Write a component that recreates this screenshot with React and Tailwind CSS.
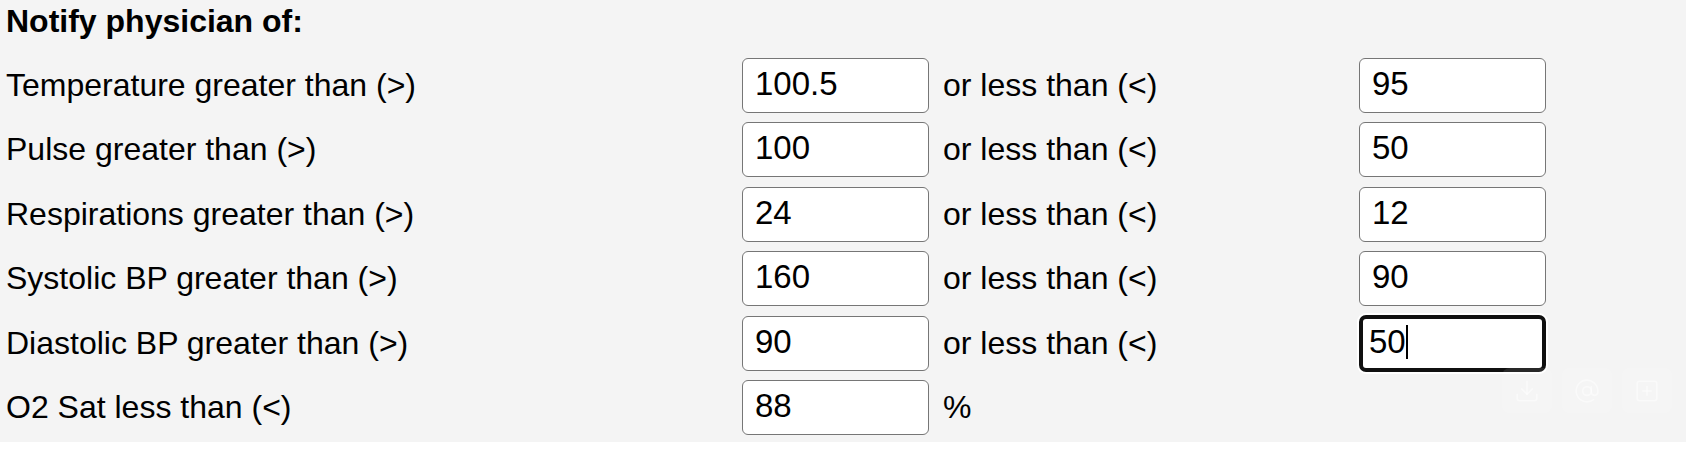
import React from "react";
import { Download, AtSign, SquarePlus } from "lucide-react";

const rows = [
  { label: "Temperature greater than (>)", high: "100.5", low: "95" },
  { label: "Pulse greater than (>)", high: "100", low: "50" },
  { label: "Respirations greater than (>)", high: "24", low: "12" },
  { label: "Systolic BP greater than (>)", high: "160", low: "90" },
  { label: "Diastolic BP greater than (>)", high: "90", low: "50", focused: true },
];

const inputCls =
  "w-[187px] h-[55px] bg-white border-[1.5px] border-[#767676] rounded-[6px] pl-[12px] pb-[3px] text-[33px] text-black outline-none";

const App = () => {
  return (
    <div className="w-full bg-white" style={{ fontFamily: '"Liberation Sans", Arial, sans-serif' }}>
      <div className="relative h-[442px] bg-[#f4f4f4] text-black">
        {/* Header */}
        <div className="h-[53px] pt-[3px] pl-[6px]">
          <div className="text-[32px] font-bold leading-[37px]">Notify physician of:</div>
        </div>

        {/* Rows */}
        {rows.map((row) => (
          <div key={row.label} className="flex items-center h-[64.5px]">
            <div className="w-[742px] pl-[6px] text-[32px] leading-[37px]">{row.label}</div>
            <input className={inputCls} defaultValue={row.high} readOnly />
            <div className="w-[430px] pl-[14px] text-[32px] leading-[37px]">or less than (&lt;)</div>
            {row.focused ? (
              <div className="w-[187px] h-[57px] bg-white border-[4px] border-[#101010] rounded-[7px] pl-[6px] pb-[3px] flex items-center text-[33px] ring-2 ring-white">
                <span>{row.low}</span>
                <span className="inline-block w-[2px] h-[34px] bg-black" />
              </div>
            ) : (
              <input className={inputCls} defaultValue={row.low} readOnly />
            )}
          </div>
        ))}

        {/* O2 Sat row */}
        <div className="flex items-center h-[64.5px]">
          <div className="w-[742px] pl-[6px] text-[32px] leading-[37px]">O2 Sat less than (&lt;)</div>
          <input className={inputCls} defaultValue="88" readOnly />
          <div className="pl-[14px] text-[32px] leading-[37px]">%</div>
        </div>

        {/* faint floating toolbar */}
        <div className="absolute right-[14px] top-[368px] flex gap-[10px] text-white/50">
          <div className="w-[50px] h-[45px] rounded-[8px] bg-white/10 flex items-center justify-center">
            <Download size={26} strokeWidth={1.5} />
          </div>
          <div className="w-[50px] h-[45px] rounded-[8px] bg-white/10 flex items-center justify-center">
            <AtSign size={26} strokeWidth={1.5} />
          </div>
          <div className="w-[50px] h-[45px] rounded-[8px] bg-white/10 flex items-center justify-center">
            <SquarePlus size={26} strokeWidth={1.5} />
          </div>
        </div>
      </div>
    </div>
  );
};

export default App;
